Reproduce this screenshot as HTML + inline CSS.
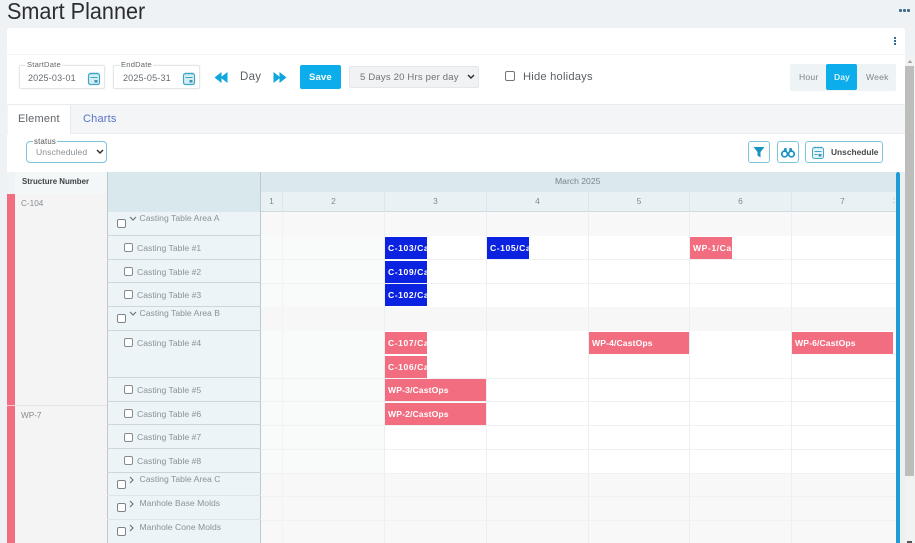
<!DOCTYPE html>
<html><head><meta charset="utf-8"><style>
html,body{margin:0;padding:0}
body{width:915px;height:543px;overflow:hidden;position:relative;background:#eef2f4;font-family:"Liberation Sans",sans-serif;color:#555}
#w{left:0;top:0;width:915px;height:543px;overflow:hidden;filter:blur(.35px)}
div,span,svg{position:absolute;box-sizing:border-box}
.t{white-space:nowrap;line-height:1}
.h{height:1px;background:#f0f1f2}
.v{width:1px;background:#eceeef;top:212px;height:331px}
.rl{left:107px;width:154px;height:1px;background:#cbd7dc}
.cb{width:9px;height:9px;border:1px solid #858b90;border-radius:2px;background:#fff;left:124px}
.cg{width:9px;height:9px;border:1px solid #7d8388;border-radius:2px;background:#fff;left:117px}
.rt{font-size:8.6px;color:#8a9298;letter-spacing:.02px;left:137px}
.gt{font-size:8.6px;color:#8a9298;letter-spacing:.02px;left:139.5px}
.ev{height:22px;color:#fff;font-weight:bold;font-size:8.6px;letter-spacing:.12px;line-height:23px;padding-left:3px;overflow:hidden;white-space:nowrap}
.n{letter-spacing:.55px}
.b{background:#0b22e0}.r{background:#f26d7f}
.dn{font-size:8.4px;color:#80898f;top:197px;text-align:center}
.dl{width:1px;background:#dce5e9;top:192px;height:20px}
.bd{border:1px solid #e4e7e9;border-radius:2px;background:#fff;box-shadow:0 0 2px #eceeef}
.lb{background:#fff;padding:0 1px;font-size:7.6px;color:#62686d;letter-spacing:.2px;line-height:8px;white-space:nowrap}
.ib{border:1px solid #7cc6dd;border-radius:3px;background:#fff}
</style></head><body><div id="w">

<div class="t" style="left:7px;top:-2px;font-size:23px;color:#2b2d30;line-height:26px;transform:scaleX(.94);transform-origin:0 0">Smart Planner</div>
<div style="left:899px;top:9px;width:2.5px;height:2.5px;background:#3e6e8e;border-radius:1px"></div>
<div style="left:903px;top:9px;width:2.5px;height:2.5px;background:#3e6e8e;border-radius:1px"></div>
<div style="left:907px;top:9px;width:2.5px;height:2.5px;background:#3e6e8e;border-radius:1px"></div>

<div style="left:7px;top:28px;width:898px;height:515px;background:#fff;border-radius:3px 3px 0 0"></div>
<div style="left:894px;top:37px;width:2px;height:2px;background:#2c6f93"></div>
<div style="left:894px;top:40px;width:2px;height:2px;background:#2c6f93"></div>
<div style="left:894px;top:43px;width:2px;height:2px;background:#2c6f93"></div>
<div class="h" style="left:7px;top:54px;width:898px;background:#f3f4f5"></div>

<!-- date inputs -->
<div class="bd" style="left:19px;top:65px;width:86px;height:24px"></div>
<div class="lb" style="left:26px;top:61px">StartDate</div>
<div class="t" style="left:28px;top:74px;font-size:9px;letter-spacing:.18px;color:#666c71">2025-03-01</div>
<svg style="left:87px;top:71px" width="15" height="15" viewBox="0 0 15 15"><rect x="1.5" y="2.5" width="11" height="11" rx="2" fill="#d5edf3" stroke="#3fa7c6" stroke-width="1.2"/><path d="M4 1.5v2M7 1.5v2M10 1.5v2M3.5 6.5h7" stroke="#3fa7c6" fill="none"/><rect x="7.5" y="9" width="3" height="2.5" fill="#3f8fb0"/></svg>
<div class="bd" style="left:113px;top:65px;width:87px;height:24px"></div>
<div class="lb" style="left:120px;top:61px">EndDate</div>
<div class="t" style="left:123px;top:74px;font-size:9px;letter-spacing:.18px;color:#666c71">2025-05-31</div>
<svg style="left:182px;top:71px" width="15" height="15" viewBox="0 0 15 15"><rect x="1.5" y="2.5" width="11" height="11" rx="2" fill="#d5edf3" stroke="#3fa7c6" stroke-width="1.2"/><path d="M4 1.5v2M7 1.5v2M10 1.5v2M3.5 6.5h7" stroke="#3fa7c6" fill="none"/><rect x="7.5" y="9" width="3" height="2.5" fill="#3f8fb0"/></svg>

<svg style="left:214px;top:72px" width="14" height="11" viewBox="0 0 14 11"><path d="M7.5 0v11L.5 5.5zM13.5 0v11L6.5 5.5z" fill="#0fa6dd"/></svg>
<div class="t" style="left:240px;top:72px;font-size:11.5px;color:#5a6167;letter-spacing:.3px">Day</div>
<svg style="left:273px;top:72px" width="14" height="11" viewBox="0 0 14 11"><path d="M.5 0v11l7-5.5zM6.5 0v11l7-5.5z" fill="#0fa6dd"/></svg>
<div style="left:300px;top:65px;width:41px;height:24px;background:#0badeb;border-radius:2px"></div>
<div class="t" style="left:309px;top:73px;font-size:9.6px;font-weight:bold;color:#fff;letter-spacing:.1px">Save</div>
<div style="left:349px;top:66px;width:130px;height:22px;background:#f0f2f3;border:1px solid #e4e7e9;border-radius:2px"></div>
<div class="t" style="left:360px;top:73px;font-size:9.5px;color:#6d7378;letter-spacing:.2px">5 Days 20 Hrs per day</div>
<svg style="left:467px;top:74px" width="8" height="6" viewBox="0 0 8 6"><path d="M1 1l3 3 3-3" fill="none" stroke="#333" stroke-width="1.5"/></svg>
<div style="left:505px;top:71px;width:10px;height:10px;border:1px solid #6f757a;border-radius:2px;background:#fff"></div>
<div class="t" style="left:523px;top:72px;font-size:11.2px;color:#5b6166;letter-spacing:.2px">Hide holidays</div>

<div style="left:790px;top:64px;width:106px;height:27px;background:#eef3f6;border-radius:2px"></div>
<div style="left:826px;top:64px;width:31px;height:26px;background:#0badeb;border-radius:2px"></div>
<div class="t" style="left:799px;top:73px;font-size:8.6px;color:#7e868c;letter-spacing:.2px">Hour</div>
<div class="t" style="left:834px;top:73px;font-size:8.6px;color:#d8f1fb;font-weight:bold">Day</div>
<div class="t" style="left:866px;top:73px;font-size:8.6px;color:#7e868c;letter-spacing:.2px">Week</div>

<!-- tabs -->
<div style="left:7px;top:104px;width:898px;height:30px;background:#f3f5f7;border-top:1px solid #e9ecee;border-bottom:1px solid #eceff1"></div>
<div style="left:8px;top:105px;width:63px;height:29px;background:#fff;border-right:1px solid #e6e9eb"></div>
<div class="t" style="left:18px;top:114px;font-size:11px;color:#5e6469;letter-spacing:.2px">Element</div>
<div class="t" style="left:83px;top:114px;font-size:11px;color:#5872c8;letter-spacing:.2px">Charts</div>

<!-- filter row -->
<div class="ib" style="left:26px;top:141px;width:81px;height:22px;border-radius:4px"></div>
<div class="lb" style="left:33px;top:138px;font-size:7.8px;color:#555">status</div>
<div class="t" style="left:36px;top:148px;font-size:8.6px;color:#8a9095;letter-spacing:.1px">Unscheduled</div>
<svg style="left:96px;top:149px" width="8" height="6" viewBox="0 0 8 6"><path d="M1 1l3 3 3-3" fill="none" stroke="#333" stroke-width="1.5"/></svg>

<div class="ib" style="left:748px;top:141px;width:22px;height:22px"></div>
<svg style="left:753px;top:146px" width="12" height="12" viewBox="0 0 12 12"><path d="M.5 1h11L7.5 6v5.5L4.5 9.5V6z" fill="#1a93bf"/></svg>
<div class="ib" style="left:777px;top:141px;width:22px;height:22px"></div>
<svg style="left:781px;top:147px" width="14" height="11" viewBox="0 0 14 11"><circle cx="3.6" cy="7" r="2.8" fill="#fff" stroke="#1a93bf" stroke-width="1.7"/><circle cx="10.4" cy="7" r="2.8" fill="#fff" stroke="#1a93bf" stroke-width="1.7"/><path d="M2 5l1.5-4h2l.5 4zM12 5l-1.5-4h-2L8 5z" fill="#1a93bf"/></svg>
<div class="ib" style="left:805px;top:141px;width:78px;height:22px"></div>
<svg style="left:811px;top:145px" width="15" height="15" viewBox="0 0 15 15"><rect x="1.5" y="2.5" width="11" height="11" rx="2" fill="#e4f3f7" stroke="#3fa7c6"/><path d="M4 1.5v2M7 1.5v2M10 1.5v2M3.5 6.5h7M3.5 9.5h3" stroke="#3fa7c6" fill="none"/><rect x="7.5" y="9" width="3" height="2.5" fill="#3f8fb0"/></svg>
<div class="t" style="left:831px;top:148px;font-size:8.4px;font-weight:bold;color:#44494d">Unschedule</div>

<!-- structure column -->
<div style="left:7px;top:172px;width:8px;height:22px;background:#eef3f5"></div>
<div style="left:7px;top:194px;width:8px;height:349px;background:#f26d7f"></div>
<div style="left:15px;top:172px;width:92px;height:22px;background:#f4f7f8"></div>
<div style="left:15px;top:194px;width:92px;height:349px;background:#f4f4f4"></div>
<div class="t" style="left:22px;top:178px;font-size:7.9px;font-weight:bold;color:#3d4347">Structure Number</div>
<div class="t" style="left:21px;top:200px;font-size:8.2px;color:#868c91">C-104</div>
<div class="h" style="left:15px;top:405px;width:92px;background:#e3e5e6"></div>
<div style="left:7px;top:405px;width:8px;height:1px;background:#fbc9d0"></div>
<div class="t" style="left:21px;top:412px;font-size:8.2px;color:#868c91">WP-7</div>

<!-- row labels -->
<div style="left:107px;top:172px;width:154px;height:40px;background:#d9e8ec"></div>
<div style="left:107px;top:212px;width:154px;height:331px;background:#edf4f8"></div>
<div style="left:107px;top:172px;width:1px;height:371px;background:#bccad0"></div>
<div style="left:260px;top:172px;width:1px;height:371px;background:#bccad0"></div>
<div class="rl" style="top:235px"></div><div class="rl" style="top:259px"></div><div class="rl" style="top:282px"></div><div class="rl" style="top:306px"></div><div class="rl" style="top:330px"></div><div class="rl" style="top:377px"></div><div class="rl" style="top:401px"></div><div class="rl" style="top:424px"></div><div class="rl" style="top:448px"></div><div class="rl" style="top:472px"></div><div class="rl" style="top:495px;background:#dde6ea"></div><div class="rl" style="top:519px;background:#dde6ea"></div>

<div class="cg" style="top:219px"></div><svg style="left:129px;top:216px" width="8" height="6" viewBox="0 0 8 6"><path d="M1 1l3 3 3-3" fill="none" stroke="#6d767c" stroke-width="1.2"/></svg><div class="t gt" style="top:214px">Casting Table Area A</div>
<div class="cb" style="top:243px"></div><div class="t rt" style="top:244px">Casting Table #1</div>
<div class="cb" style="top:267px"></div><div class="t rt" style="top:268px">Casting Table #2</div>
<div class="cb" style="top:290px"></div><div class="t rt" style="top:291px">Casting Table #3</div>
<div class="cg" style="top:314px"></div><svg style="left:129px;top:311px" width="8" height="6" viewBox="0 0 8 6"><path d="M1 1l3 3 3-3" fill="none" stroke="#6d767c" stroke-width="1.2"/></svg><div class="t gt" style="top:309px">Casting Table Area B</div>
<div class="cb" style="top:338px"></div><div class="t rt" style="top:339px">Casting Table #4</div>
<div class="cb" style="top:385px"></div><div class="t rt" style="top:386px">Casting Table #5</div>
<div class="cb" style="top:409px"></div><div class="t rt" style="top:410px">Casting Table #6</div>
<div class="cb" style="top:433px"></div><div class="t rt" style="top:433px">Casting Table #7</div>
<div class="cb" style="top:456px"></div><div class="t rt" style="top:457px">Casting Table #8</div>
<div class="cg" style="top:480px"></div><svg style="left:129px;top:476px" width="6" height="8" viewBox="0 0 6 8"><path d="M1 1l3 3-3 3" fill="none" stroke="#6d767c" stroke-width="1.2"/></svg><div class="t gt" style="top:475px">Casting Table Area C</div>
<div class="cg" style="top:503px"></div><svg style="left:129px;top:500px" width="6" height="8" viewBox="0 0 6 8"><path d="M1 1l3 3-3 3" fill="none" stroke="#6d767c" stroke-width="1.2"/></svg><div class="t gt" style="top:499px">Manhole Base Molds</div>
<div class="cg" style="top:527px"></div><svg style="left:129px;top:524px" width="6" height="8" viewBox="0 0 6 8"><path d="M1 1l3 3-3 3" fill="none" stroke="#6d767c" stroke-width="1.2"/></svg><div class="t gt" style="top:523px">Manhole Cone Molds</div>

<!-- timeline header -->
<div style="left:261px;top:172px;width:635px;height:20px;background:#dbe8ec"></div>
<div class="t" style="left:555px;top:177px;font-size:8.6px;color:#7a8389">March 2025</div>
<div style="left:261px;top:192px;width:635px;height:20px;background:#e9f1f5;border-bottom:1px solid #d0d9de"></div>
<div class="dl" style="left:282px"></div><div class="dl" style="left:384px"></div><div class="dl" style="left:486px"></div><div class="dl" style="left:588px"></div><div class="dl" style="left:689px"></div><div class="dl" style="left:791px"></div>
<div class="t dn" style="left:261px;width:21px">1</div><div class="t dn" style="left:283px;width:101px">2</div><div class="t dn" style="left:385px;width:101px">3</div><div class="t dn" style="left:487px;width:101px">4</div><div class="t dn" style="left:589px;width:100px">5</div><div class="t dn" style="left:690px;width:101px">6</div><div class="t dn" style="left:792px;width:101px">7</div>
<div class="t" style="left:893px;top:197px;font-size:8px;color:#8a9399">:</div>

<!-- grid -->
<div style="left:261px;top:212px;width:635px;height:331px;background:#fff"></div>
<div style="left:261px;top:212px;width:123px;height:331px;background:#f9fafa"></div>
<div style="left:261px;top:212px;width:635px;height:24px;background:#f8f8f8"></div>
<div style="left:261px;top:307px;width:635px;height:24px;background:#f7f7f7"></div>
<div style="left:261px;top:473px;width:635px;height:70px;background:#f8f8f8"></div>
<div class="h" style="left:261px;top:259px;width:635px"></div><div class="h" style="left:261px;top:283px;width:635px"></div><div class="h" style="left:261px;top:378px;width:635px"></div><div class="h" style="left:261px;top:401px;width:635px"></div><div class="h" style="left:261px;top:425px;width:635px"></div><div class="h" style="left:261px;top:449px;width:635px"></div><div class="h" style="left:261px;top:473px;width:635px"></div><div class="h" style="left:261px;top:496px;width:635px"></div><div class="h" style="left:261px;top:520px;width:635px"></div>
<div class="v" style="left:282px;background:#f2f3f3"></div><div class="v" style="left:384px"></div><div class="v" style="left:486px"></div><div class="v" style="left:588px"></div><div class="v" style="left:689px"></div><div class="v" style="left:791px"></div>

<!-- events -->
<div class="ev b n" style="left:385px;top:237px;width:42px">C-103/CastOps</div>
<div class="ev b n" style="left:487px;top:237px;width:42px">C-105/CastOps</div>
<div class="ev r n" style="left:690px;top:237px;width:42px">WP-1/CastOps</div>
<div class="ev b n" style="left:385px;top:261px;width:42px">C-109/CastOps</div>
<div class="ev b n" style="left:385px;top:284px;width:42px">C-102/CastOps</div>
<div class="ev r n" style="left:385px;top:332px;width:42px">C-107/CastOps</div>
<div class="ev r n" style="left:385px;top:356px;width:42px">C-106/CastOps</div>
<div class="ev r" style="left:589px;top:332px;width:100px">WP-4/CastOps</div>
<div class="ev r" style="left:792px;top:332px;width:101px">WP-6/CastOps</div>
<div class="ev r" style="left:385px;top:379px;width:101px">WP-3/CastOps</div>
<div class="ev r" style="left:385px;top:403px;width:101px">WP-2/CastOps</div>

<!-- scrollbars -->
<div style="left:896px;top:172px;width:4px;height:371px;background:#1f9bd6;border-radius:2px 2px 0 0"></div>
<div style="left:900px;top:172px;width:5px;height:371px;background:#eaf1f0"></div>
<div style="left:905px;top:55px;width:10px;height:488px;background:#f1f2f2"></div>
<div style="left:905px;top:66px;width:9px;height:410px;background:#bdbdbb"></div>
<svg style="left:906px;top:58px" width="8" height="6" viewBox="0 0 8 6"><path d="M4 2l2.5 3h-5z" fill="#a5a5a5"/></svg>
<div style="left:907px;top:541px;width:5px;height:2px;background:#555"></div>
</div></body></html>
